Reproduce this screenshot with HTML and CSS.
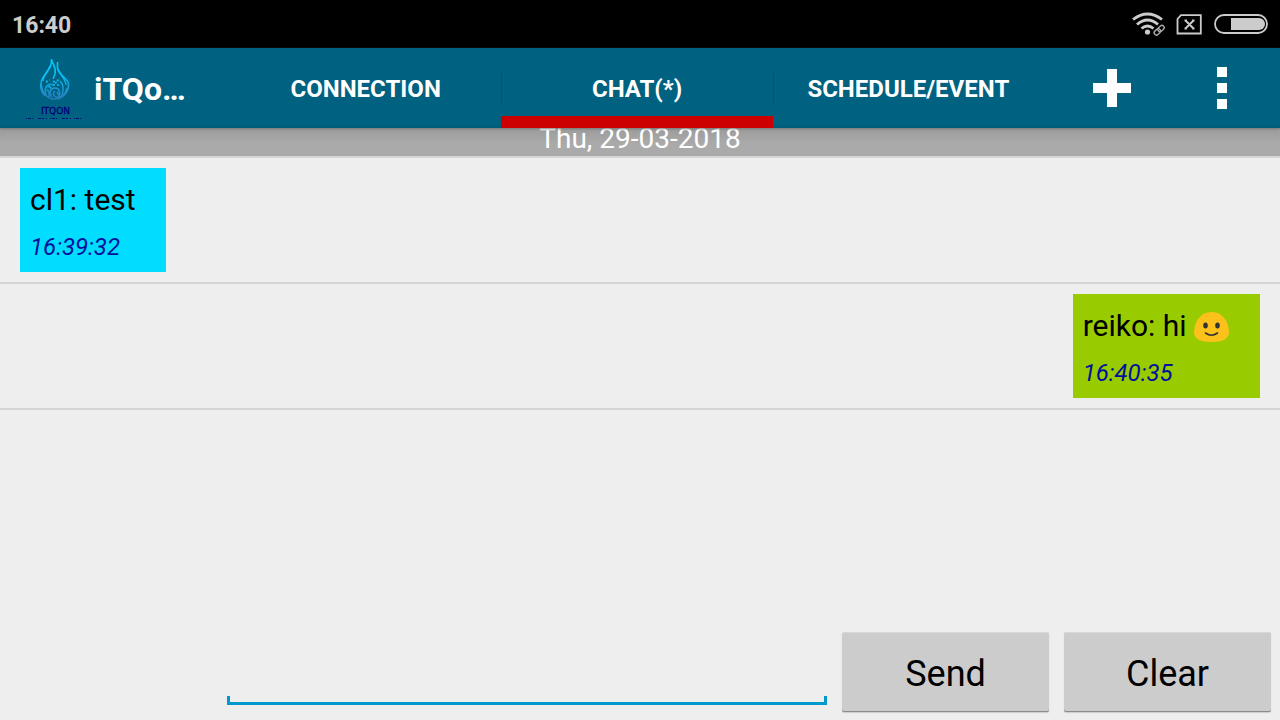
FILE: index.html
```
<!DOCTYPE html>
<html lang="en">
<head>
<meta charset="utf-8">
<title>iTQon chat</title>
<link rel="stylesheet" href="styles.css">
</head>
<body>
<div class="status">
  <time class="clock">16:40</time>
  <svg class="status-icons" width="138" height="28" viewBox="1131 10 138 28" fill="none" stroke="#ccc" aria-hidden="true">
    <g stroke-width="2.800">
      <path d="M1133 19.500Q1147.500 8.500 1162 19.500"/>
      <path d="M1137 24.500Q1147.500 15.500 1158 24.500"/>
      <path d="M1141.500 28.500Q1147.500 23.500 1153.500 28.500"/>
    </g>
    <circle cx="1147.500" cy="32" r="2.600" fill="#ccc" stroke="none"/>
    <g stroke-width="4" stroke="#000" transform="rotate(-43 1159 30)">
      <rect x="1153" y="28" width="12" height="4.500" rx="2.200"/>
    </g>
    <g stroke-width="1.400" stroke="#aaa" transform="rotate(-43 1159 30)">
      <rect x="1153" y="28" width="7" height="4.500" rx="2.200"/>
      <rect x="1158" y="28" width="7" height="4.500" rx="2.200"/>
    </g>
    <path stroke-width="1.800" d="M1181 15.200H1200.800V33.500H1177.500V19Z"/>
    <path stroke-width="2" d="M1185.500 20.500L1193.500 28.500M1193.500 20.500L1185.500 28.500M1184.500 20.500H1187M1192 20.500H1194.500M1184.500 28.500H1187M1192 28.500H1194.500"/>
    <rect x="1215" y="15" width="52" height="18" rx="9" stroke-width="1.800"/>
    <path fill="#ccc" stroke="none" d="M1231 18H1259A6 6 0 0 1 1259 30H1231Z"/>
  </svg>
</div>
<header class="bar">
  <svg class="logo" width="64" height="64" viewBox="22 56 64 64" aria-hidden="true">
    <defs>
      <linearGradient id="flame" gradientUnits="userSpaceOnUse" x1="0" y1="58" x2="0" y2="100">
        <stop offset="0" stop-color="#00ccff"/><stop offset=".45" stop-color="#08bdf2"/><stop offset="1" stop-color="#2a78b8"/>
      </linearGradient>
    </defs>
    <g fill="none" stroke="url(#flame)" stroke-width="1.500">
      <path d="M51.500 59C52 67 48 70 44 76C39 83 40 91 45 96"/>
      <path d="M51.500 60C53 65 56.500 67 55 74L53 79"/>
      <path d="M50 66C49 71 43 75 43 81"/>
      <path d="M57.500 62V68C58 74 66 77 68.500 83C69 90 65 96 58 99"/>
      <path d="M58 69C59 74 66 79 66 85"/>
      <path d="M41 84C42 92 47 99 54 99C61 99 66 94 67 88"/>
      <path d="M46 95C44 89 46 85 51 84M52 97C48 92 51 88 55 88C60 88 61 95 58 97C54 98 52 93 55 91"/>
      <path d="M60 81C64 85 64 92 61 97M49 91V97M57 92L60 97"/>
      <path stroke-width="2" stroke-dasharray="2 2" d="M46 82L50 80M53 82L59 80M48 87L57 82M53 85L61 85M47 91L52 86"/>
    </g>
    <text class="logo-name" x="55.500" y="114" text-anchor="middle">ITQON</text>
    <path d="M26 118.500H85" stroke="#000078" stroke-opacity=".8" stroke-dasharray="1 1 3 1 1 5 3 1 2 2 1 3"/>
  </svg>
  <h1 class="title">iTQo…</h1>
  <nav class="tabs">
    <button class="tab" type="button">CONNECTION</button>
    <button class="tab tab-active" type="button" aria-current="page">CHAT(*)</button>
    <button class="tab" type="button">SCHEDULE/EVENT</button>
  </nav>
  <button class="action action-add" type="button" aria-label="Add">
    <svg width="44" height="44" viewBox="0 0 44 44" aria-hidden="true"><path fill="#fff" d="M17 3h10v14h14v10H27v14H17V27H3V17h14z"/></svg>
  </button>
  <button class="action action-more" type="button" aria-label="More options">
    <svg width="12" height="42" viewBox="0 0 12 42" aria-hidden="true"><path fill="#fff" d="M1 0h10v10H1zM1 16h10v10H1zM1 32h10v10H1z"/></svg>
  </button>
</header>
<main class="chat">
  <h2 class="date">Thu, 29-03-2018</h2>
  <ul class="messages">
    <li class="message">
      <div class="bubble">
        <p class="text">cl1: test</p>
        <time class="sent">16:39:32</time>
      </div>
    </li>
    <li class="message message-own">
      <div class="bubble bubble-own">
        <p class="text">reiko: hi
          <svg class="smile" width="36" height="32" viewBox="0 0 36 32" role="img" aria-label="smile"><path fill="#fcc21b" d="M17.500 1C7 1 0.500 10 0 21C0 28 7 31 17.500 31S35.200 28 35 21C34.500 10 28.500 1 17.500 1Z"/><ellipse cx="11.500" cy="14.500" rx="2.300" ry="3" fill="#333"/><ellipse cx="23.500" cy="14.500" rx="2.300" ry="3" fill="#333"/><path d="M11.500 22Q17.500 26.500 23.500 22" fill="none" stroke="#333" stroke-width="1.600" stroke-linecap="round"/></svg></p>
        <time class="sent">16:40:35</time>
      </div>
    </li>
  </ul>
</main>
<form class="composer">
  <input class="entry" type="text" aria-label="Message">
  <button class="key" type="button">Send</button>
  <button class="key" type="button">Clear</button>
</form>
</body>
</html>
```
FILE: styles.css
```
* { box-sizing: border-box; }

body {
  margin: 0;
  min-height: 100vh;
  display: flex;
  flex-direction: column;
  background: #eee;
  color: #000;
  font-family: Roboto, "Liberation Sans", sans-serif;
}

button, input { font: inherit; border: 0; padding: 0; }
h1, h2, p, ul { margin: 0; padding: 0; }

.status {
  display: flex;
  align-items: center;
  justify-content: space-between;
  height: 48px;
  padding: 0 11px 0 12px;
  background: #000;
  color: #ccc;
}
.clock { font-size: 23px; font-weight: 700; line-height: 28px; padding-top: 4px; }

.bar {
  position: relative;
  display: flex;
  align-items: center;
  height: 80px;
  padding-left: 22px;
  background: linear-gradient(#006280 76px, #005a77);
  box-shadow: 0 1px 2px #777;
  color: #fff;
}
.logo { flex: none; }
.logo-name { font: 400 9px "DejaVu Sans", sans-serif; fill: #000078; stroke: #000078; stroke-width: .3px; }
.title { width: 144px; padding: 2px 0 0 8px; font-size: 32px; line-height: 40px; font-weight: 700; }
.tabs { flex: 1; display: flex; height: 80px; margin-right: 16px; }
.tab {
  flex: 1;
  height: 80px;
  border-bottom: 12px solid transparent;
  padding-top: 14px;
  background: none;
  color: #fff;
  font-size: 24px;
  font-weight: 700;
}
.tab + .tab {
  background: linear-gradient(#005573, #005573) 0 24px / 1px 32px no-repeat;
}
.tab-active { border-bottom-color: #c00; }
.action {
  display: grid;
  place-items: center;
  height: 80px;
  background: none;
}
.action-add { width: 104px; }
.action-more { width: 116px; }

.chat { flex: 1; }
.date {
  height: 30px;
  border-bottom: 2px solid #d5d5d5;
  background: linear-gradient(#9c9c9c, #aaa 16px);
  color: #fff;
  font-size: 28px;
  line-height: 22px;
  font-weight: 400;
  text-align: center;
}
.messages { list-style: none; }
.message {
  display: flex;
  padding: 10px 20px;
  border-bottom: 2px solid #d5d5d5;
}
.message-own { justify-content: flex-end; }
.bubble { padding: 12px 30px 8px 10px; background: #0df; }
.bubble-own { background: #9c0; }
.text { font-size: 30px; line-height: 40px; }
.smile { vertical-align: -7px; }
.sent {
  display: block;
  padding-top: 10px;
  color: #00129c;
  font-size: 24px;
  line-height: 34px;
  font-style: italic;
}

.composer {
  display: grid;
  grid-template-columns: 1fr 207px 207px;
  gap: 15px;
  padding: 0 9px 8px 227px;
}
.entry {
  min-width: 0;
  margin-bottom: 7px;
  padding: 0 12px;
  background:
    linear-gradient(#09c, #09c) left bottom / 3px 9px no-repeat,
    linear-gradient(#09c, #09c) right bottom / 3px 9px no-repeat,
    linear-gradient(#09c, #09c) left bottom / 100% 3px no-repeat;
  font-size: 36px;
  outline: none;
}
.key {
  height: 80px;
  padding-top: 4px;
  border-radius: 2px;
  background: #ccc;
  box-shadow: inset 0 1px #d8d8d8, inset 0 -1px #8c8c8c, 0 1px 1px #ccc;
  color: #000;
  font-size: 36px;
}
```
